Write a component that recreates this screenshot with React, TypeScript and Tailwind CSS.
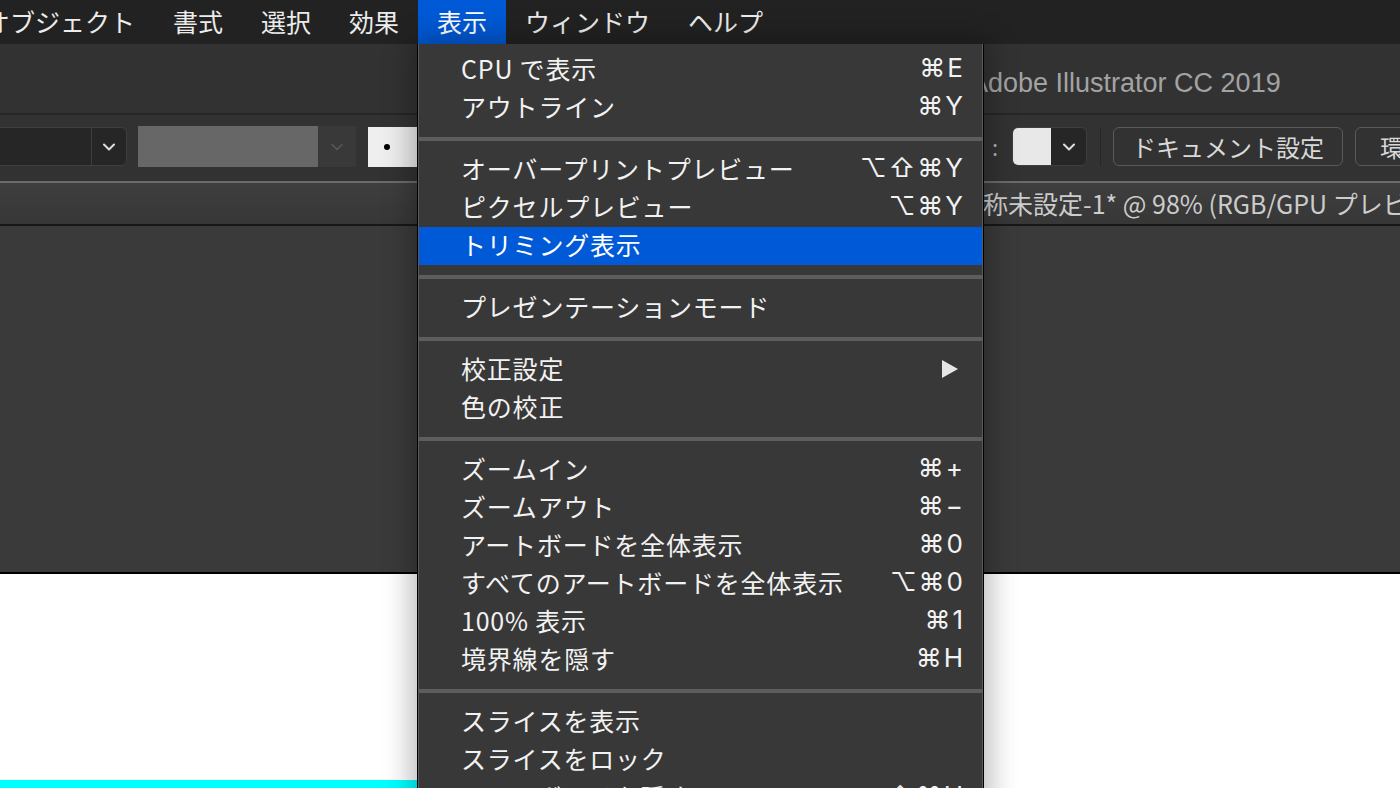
import React from "react";
import { ChevronDown } from "lucide-react";

const jp = { fontFamily: '"Noto Sans CJK JP", "Noto Sans", sans-serif' };
const keys = { fontFamily: 'Inter, "DejaVu Sans", "Noto Sans CJK JP", sans-serif' };
const latin = { fontFamily: '"Liberation Sans", Arial, sans-serif' };

const menuBar = ["オブジェクト", "書式", "選択", "効果", "表示", "ウィンドウ", "ヘルプ"];

type Item = { label: string; keys?: string; sub?: boolean; active?: boolean };

const groups: Item[][] = [
  [
    { label: "CPU で表示", keys: "⌘E" },
    { label: "アウトライン", keys: "⌘Y" },
  ],
  [
    { label: "オーバープリントプレビュー", keys: "⌥⇧⌘Y" },
    { label: "ピクセルプレビュー", keys: "⌥⌘Y" },
    { label: "トリミング表示", active: true },
  ],
  [{ label: "プレゼンテーションモード" }],
  [{ label: "校正設定", sub: true }, { label: "色の校正" }],
  [
    { label: "ズームイン", keys: "⌘+" },
    { label: "ズームアウト", keys: "⌘−" },
    { label: "アートボードを全体表示", keys: "⌘0" },
    { label: "すべてのアートボードを全体表示", keys: "⌥⌘0" },
    { label: "100% 表示", keys: "⌘1" },
    { label: "境界線を隠す", keys: "⌘H" },
  ],
  [
    { label: "スライスを表示" },
    { label: "スライスをロック" },
    { label: "アートボードを隠す", keys: "⇧⌘H" },
  ],
];

const MenuRow = ({ item }: { item: Item }) => (
  <div
    className={`flex h-[38px] items-center justify-between pl-[42px] pr-[17px] text-[25px] leading-[38px] ${
      item.active ? "bg-[#0059d6] text-white" : "text-[#f2f2f2]"
    }`}
  >
    <span className="-translate-y-[2px] whitespace-nowrap tracking-[0.8px]">{item.label}</span>
    {item.keys && (
      <span className="-translate-y-[2px] whitespace-nowrap text-[26px] tracking-[2px]" style={keys}>
        {item.keys}
      </span>
    )}
    {item.sub && (
      <svg width="18" height="20" viewBox="0 0 18 20" className="mr-[6px] -translate-y-[1px]">
        <path d="M1 1 L17 10 L1 19 Z" fill="#e6e6e6" />
      </svg>
    )}
  </div>
);

const ViewMenu = () => (
  <div className="absolute left-[417px] top-[44px] w-[567px] bg-black px-px shadow-[0_0_26px_6px_rgba(0,0,0,0.28)]">
    <div className="border-x border-[#5b5b5b] bg-[#383838]" style={jp}>
      {groups.map((g, i) => (
        <div key={i}>
          {i > 0 && <div className="h-[4px] bg-[#5d5d5d]" />}
          <div className={i === 0 ? "pb-[10px] pt-[7px]" : "py-[10px]"}>
            {g.map((item) => (
              <MenuRow key={item.label} item={item} />
            ))}
          </div>
        </div>
      ))}
    </div>
  </div>
);

const App = () => {
  return (
    <div className="relative flex h-[788px] w-[1400px] flex-col overflow-hidden bg-[#3a3a3a]" style={jp}>
      {/* menubar */}
      <div className="flex h-[44px] shrink-0 items-center bg-[#222222] text-[25px] leading-[44px] text-[#ececec]">
        <div className="-ml-[34px] flex h-full">
          {menuBar.map((m) => (
            <span
              key={m}
              className={`whitespace-nowrap px-[19px] ${m === "表示" ? "bg-[#0059d6] text-white" : ""}`}
            >
              <span className="inline-block -translate-y-[1px]">{m}</span>
            </span>
          ))}
        </div>
      </div>

      {/* title */}
      <div className="flex h-[69px] shrink-0 items-center bg-[#323232] pl-[970px] pt-[10px]">
        <span className="whitespace-nowrap text-[27px] text-[#a3a3a3]" style={latin}>
          Adobe Illustrator CC 2019
        </span>
      </div>
      <div className="h-[2px] shrink-0 bg-[#262626]" />

      {/* control bar */}
      <div className="flex h-[66px] shrink-0 items-center overflow-hidden bg-[#323232] pb-[3px]">
        <div className="-ml-[20px] flex h-[39px] w-[147px] shrink-0 overflow-hidden rounded-md border border-[#3e3e3e] bg-[#262626]">
          <div className="flex-1" />
          <div className="flex w-[35px] items-center justify-center border-l border-[#3e3e3e]">
            <ChevronDown size={20} strokeWidth={2.5} color="#dcdcdc" />
          </div>
        </div>
        <div className="ml-[11px] flex h-[41px] w-[218px] shrink-0">
          <div className="w-[180px] bg-[#676767]" />
          <div className="flex flex-1 items-center justify-center bg-[#393939]">
            <ChevronDown size={20} strokeWidth={2} color="#585858" />
          </div>
        </div>
        <div className="ml-[12px] flex h-[40px] w-[200px] shrink-0 items-center bg-gradient-to-r from-[#efefef] to-[#e2e2e2] pl-[16px]">
          <div className="h-[6px] w-[6px] rounded-full bg-black" />
        </div>
        <span className="ml-[421px] w-[12px] shrink-0 text-center text-[22px] text-[#b0b0b0]">:</span>
        <div className="ml-[11px] flex h-[39px] w-[75px] shrink-0 overflow-hidden rounded-md border border-[#3e3e3e] bg-[#262626]">
          <div className="w-[38px] bg-[#e8e8e8]" />
          <div className="flex flex-1 items-center justify-center">
            <ChevronDown size={20} strokeWidth={2.5} color="#dcdcdc" />
          </div>
        </div>
        <div className="ml-[13px] h-[39px] w-px shrink-0 bg-[#262626]" />
        <div className="ml-[12px] flex h-[39px] w-[230px] shrink-0 items-center justify-center rounded-md border border-[#5a5a5a] text-[24px] text-[#d9d9d9]">
          ドキュメント設定
        </div>
        <div className="ml-[12px] flex h-[39px] w-[160px] shrink-0 items-center rounded-md border border-[#5a5a5a] pl-[24px] text-[24px] text-[#d9d9d9]">
          環境設定
        </div>
      </div>
      <div className="h-[2px] shrink-0 bg-[#6b6b6b]" />

      {/* document tab */}
      <div className="flex h-[41px] shrink-0 items-center bg-gradient-to-b from-[#3e3e3e] to-[#373737] pl-[958px]">
        <span className="whitespace-nowrap text-[25px] text-[#cccccc]">
          名称未設定-1* @ 98% (RGB/GPU プレビュー)
        </span>
      </div>
      <div className="h-[2px] shrink-0 bg-[#171717]" />

      {/* canvas */}
      <div className="h-[346px] shrink-0 bg-[#3a3a3a]" />
      <div className="h-[2px] shrink-0 bg-black" />
      <div className="flex flex-1 flex-col justify-end bg-white">
        <div className="h-[8px] w-[600px] bg-[#00ffff]" />
      </div>

      <ViewMenu />
    </div>
  );
};

export default App;
